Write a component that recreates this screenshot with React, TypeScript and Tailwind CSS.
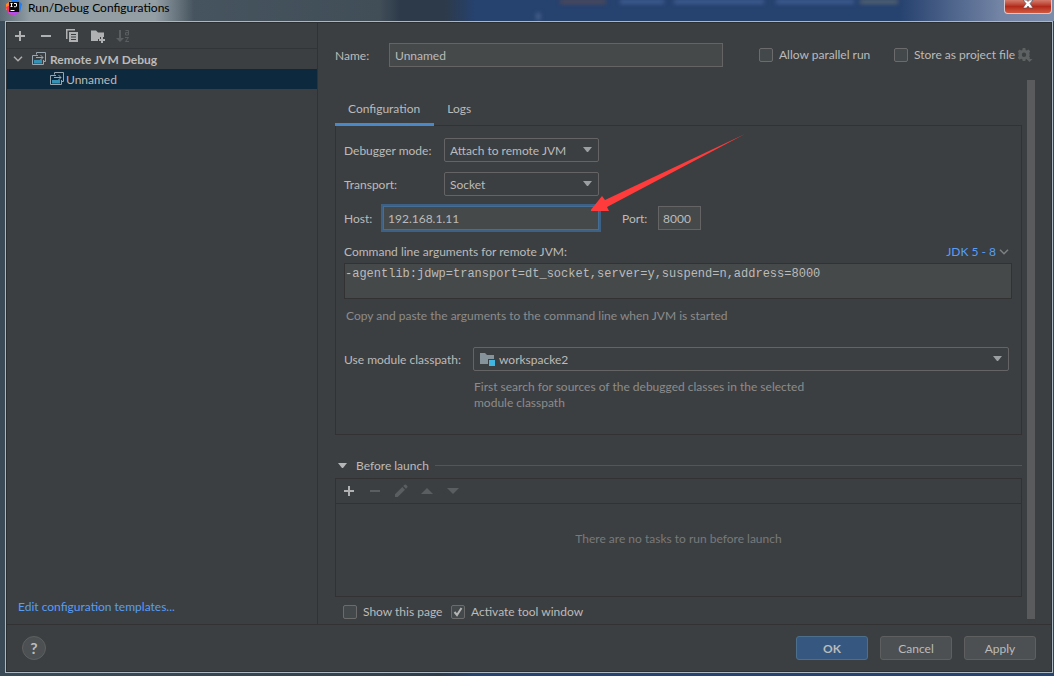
import { useState, type ReactNode } from "react";

const FIELD = "border border-[#646464] bg-[#45494a] text-[#bbbbbb] outline-none";

function PlusIcon() {
  return (
    <svg width="16" height="16" viewBox="0 0 16 16" fill="currentColor">
      <path d="M7 3h2v4h4v2H9v4H7V9H3V7h4z" />
    </svg>
  );
}

function MinusIcon() {
  return (
    <svg width="16" height="16" viewBox="0 0 16 16" fill="currentColor">
      <path d="M3 7h10v2H3z" />
    </svg>
  );
}

function CopyIcon() {
  return (
    <svg width="16" height="16" viewBox="0 0 16 16" fill="currentColor">
      <path d="M2 1h9v1.5H3.5V11H2z" />
      <path fillRule="evenodd" d="M5 4h9v10H5zM7 6v1h5V6zM7 8.500v1h5v-1zM7 11v1h5v-1z" />
    </svg>
  );
}

function NewFolderIcon() {
  return (
    <svg width="16" height="16" viewBox="0 0 16 16" fill="currentColor">
      <path d="M1 2.5h5l2 2h6V9h-4v2H8v2H1z" />
      <path d="M11 9h2v2h2v2h-2v2h-2v-2H9v-2h2z" />
    </svg>
  );
}

function SortIcon() {
  return (
    <svg width="16" height="16" viewBox="0 0 16 16" fill="none" stroke="currentColor">
      <path d="M4 2v9" strokeWidth="2" />
      <path d="M0 10h8l-4 4z" fill="currentColor" stroke="none" />
      <path d="M9.500 2.500h3V7h-3V4.700h3M9 9.500h3.500l-3 4H13" />
    </svg>
  );
}

function RemoteIcon() {
  return (
    <svg width="16" height="16" viewBox="0 0 16 16" fill="none">
      <path d="M5.500 3.500v-2h9v9H13" stroke="#9aa7b0" />
      <path d="M7 4.500H1.500v9h11V9" stroke="#9aa7b0" />
      <path d="M5 6.500h7M9.500 4 12 6.500 9.500 9" stroke="#9aa7b0" />
      <path d="M3 9h8v3.500H3z" fill="#3592b5" />
    </svg>
  );
}

function GearIcon() {
  return (
    <svg width="16" height="16" viewBox="0 0 16 16" fill="#5e6162">
      <path
        fillRule="evenodd"
        d="M5.700 1h2.600l.4 1.900 1.100.5 1.700-1 1.700 2-1 1.500.4 1.100V8.500l-.5 1 1.100 1.600-1.800 1.800-1.600-1-1.100.4-.4 1.700H5.700l-.4-1.800-1.100-.5-1.700 1-1.700-2 1-1.600L1.400 8V7l.4-1.100-1-1.500 1.700-2 1.700 1 1.100-.5zM7 5.500a2.200 2.200 0 1 0 0 4.400 2.200 2.200 0 0 0 0-4.400z"
      />
      <path d="M9.500 12h6l-3 3z" />
    </svg>
  );
}

function PencilIcon() {
  return (
    <svg width="16" height="16" viewBox="0 0 16 16" fill="currentColor">
      <path d="M2 11.300 9.300 4 12 6.700 4.700 14H2zM10.200 3.100 11.600 1.700q.7-.6 1.400 0l1.300 1.300q.6.700 0 1.400l-1.400 1.400z" />
    </svg>
  );
}

function Triangle({ up = false }: { up?: boolean }) {
  return (
    <svg width="16" height="16" viewBox="0 0 16 16" fill="currentColor">
      <path d={up ? "M2 11h12L8 5z" : "M2 5h12l-6 6z"} />
    </svg>
  );
}

function SmallTriangle() {
  return (
    <svg width="10" height="6" viewBox="0 0 10 6" fill="currentColor">
      <path d="M0 0h9L5 5H4z" />
    </svg>
  );
}

function Chevron() {
  return (
    <svg width="10" height="6" viewBox="0 0 10 6" fill="none" stroke="currentColor" strokeWidth="1.500">
      <path d="M1 .700 5 4.700 9 .700" />
    </svg>
  );
}

function ModuleIcon() {
  return (
    <svg width="16" height="16" viewBox="0 0 16 16">
      <path d="M1 2h5l2 2h7v4H9v5H1z" fill="#87939a" />
      <path d="M10 9h6v6h-6z" fill="#40b6e0" />
    </svg>
  );
}

function AppLogo() {
  return (
    <svg width="16" height="16" viewBox="0 0 16 16">
      <path d="M0 4 6 0l4 5-4 6-6-1z" fill="#fc8a2b" />
      <path d="M5 0h7l4 4-2 8-5 1z" fill="#1f7df5" />
      <path d="M0 7 5 5l8 7-4 3-7-1z" fill="#fe2d63" />
      <path d="m2 12 8-1 3 2-4 2-6-1z" fill="#b64df0" />
      <path d="M3 2h10v10H3z" fill="#0a0a0a" />
      <path d="M4.500 3.500h2M5.500 3.500v3M4.500 6.500h2M8 3.500h2.500v2.500q0 .7-1 .7H8M4.500 10.500h4" stroke="#fff" fill="none" />
    </svg>
  );
}

function ToolButton({ label, disabled = false, children }: { label: string; disabled?: boolean; children: ReactNode }) {
  return (
    <button
      type="button"
      aria-label={label}
      title={label}
      disabled={disabled}
      className="flex size-4 items-center justify-center text-[#afb1b3] disabled:text-[#5b5e60]"
    >
      {children}
    </button>
  );
}

function CheckBox({ label, defaultChecked = false }: { label: string; defaultChecked?: boolean }) {
  return (
    <label className="flex items-center gap-1.5 whitespace-nowrap">
      <span className="grid size-3.5 place-items-center">
        <input
          type="checkbox"
          defaultChecked={defaultChecked}
          className="peer col-start-1 row-start-1 size-3.5 appearance-none rounded-xs border border-[#6b6b6b] bg-[#43494a]"
        />
        <svg
          viewBox="0 0 14 14"
          className="pointer-events-none invisible col-start-1 row-start-1 size-3.5 peer-checked:visible"
          fill="none"
          stroke="#b4b4b4"
          strokeWidth="2"
        >
          <path d="m3.500 7 2.500 3 4.500-7" />
        </svg>
      </span>
      {label}
    </label>
  );
}

function Combo({ id, options, icon, className }: { id: string; options: string[]; icon?: ReactNode; className: string }) {
  return (
    <div className={`relative h-6 ${className}`}>
      <select
        id={id}
        className={`h-6 w-full appearance-none rounded-xs border border-[#646464] bg-[#3c3f41] pt-0.5 pr-6 text-[#bbbbbb] outline-none ${
          icon ? "pl-[25px]" : "pl-[5px]"
        }`}
      >
        {options.map((o) => (
          <option key={o}>{o}</option>
        ))}
      </select>
      {icon && <span className="pointer-events-none absolute top-1 left-1.5">{icon}</span>}
      <span className="pointer-events-none absolute top-[9px] right-1.5 text-[#9c9fa1]">
        <SmallTriangle />
      </span>
    </div>
  );
}

function TitleBar() {
  return (
    <header className="flex h-[21px] items-start overflow-hidden bg-[linear-gradient(90deg,#5d6c77_0px,#46545f_190px,#414e58_380px,#2d3a4a_400px,#2d3a4a_445px,#26426f_475px,#26426f_900px,#7384a5_1000px,#7c8cab_1054px)]">
      <div className="flex h-[21px] items-start bg-[linear-gradient(90deg,transparent,#929da4_30px,#929da4_155px,transparent)] pr-6 pl-1.5">
        <div className="mr-1.5">
          <AppLogo />
        </div>
        <h1 className="leading-4 text-black">Run/Debug Configurations</h1>
      </div>
      {/* editor text seen through the glass */}
      <svg className="ml-auto shrink-0 blur-[2px]" width="460" height="21" viewBox="0 0 460 21" fill="none" strokeWidth="5">
        <path d="M24 1h46" stroke="#5a4a52" />
        <path d="M84 1h44M138 1h90M240 1h78" stroke="#45639a" />
        <path d="M324 1h38" stroke="#606a70" />
        <path d="M2 13v7" stroke="#48618c" />
      </svg>
      <button
        type="button"
        aria-label="Close"
        className="mr-[2px] ml-2 flex h-3.5 w-12 shrink-0 items-start justify-center rounded-b-sm border border-t-0 border-[#d9c9cf] bg-linear-to-b from-[#d47a6c] via-[#b3291a] to-[#cf5a40]"
      >
        <svg width="12" height="9" viewBox="0 0 12 9">
          <path d="M1 0h3.500L6 1.500 7.500 0H11L8 3.500 11 8H7.500L6 6 4.500 8H1l3-4.500z" fill="#fff" stroke="#4b4a5a" strokeWidth=".6" />
        </svg>
      </button>
    </header>
  );
}

function Sidebar() {
  return (
    <aside className="flex w-[311px] shrink-0 flex-col border-r border-[#323232]">
      <div className="flex h-[26px] shrink-0 items-center gap-2.5 border-b border-[#323537] pl-[5px]">
        <ToolButton label="Add New Configuration"><PlusIcon /></ToolButton>
        <ToolButton label="Remove Configuration"><MinusIcon /></ToolButton>
        <ToolButton label="Copy Configuration"><CopyIcon /></ToolButton>
        <ToolButton label="Create New Folder"><NewFolderIcon /></ToolButton>
        <ToolButton label="Sort Configurations" disabled><SortIcon /></ToolButton>
      </div>
      <ul className="flex-1">
        <li>
          <div className="flex h-5 items-center pl-1.5">
            <span className="mr-2 text-[#adadad]"><Chevron /></span>
            <RemoteIcon />
            <span className="ml-[3px] pt-0.5 font-bold">Remote JVM Debug</span>
          </div>
          <ul>
            <li className="flex h-5 items-center bg-[#0d293e] pl-[42px]">
              <RemoteIcon />
              <span className="ml-px pt-0.5">Unnamed</span>
            </li>
          </ul>
        </li>
      </ul>
      <a href="#templates" className="mb-[9px] ml-[11px] text-[#589df6]">
        Edit configuration templates...
      </a>
    </aside>
  );
}

function ConfigurationPanel() {
  const [host, setHost] = useState("192.168.1.11");
  const [port, setPort] = useState("8000");

  return (
    <section className="-mt-px border border-[#323232] pt-3 pr-[9px] pb-[23px] pl-2">
      <div className="flex flex-col gap-2.5">
        <div className="flex h-6 items-center">
          <label htmlFor="mode" className="w-[100px] pt-0.5">Debugger mode:</label>
          <Combo id="mode" options={["Attach to remote JVM", "Listen to remote JVM"]} className="w-[155px]" />
        </div>
        <div className="flex h-6 items-center">
          <label htmlFor="transport" className="w-[100px] pt-0.5">Transport:</label>
          <Combo id="transport" options={["Socket", "Shared memory"]} className="w-[155px]" />
        </div>
        <div className="flex h-6 items-center">
          <label htmlFor="host" className="w-[39px] pt-0.5">Host:</label>
          <div className="relative">
            <input
              id="host"
              value={host}
              onChange={(e) => setHost(e.target.value)}
              className="block h-6 w-[216px] border border-[#466d94] bg-[#45494a] px-1 text-[#bbbbbb] outline-2 outline-[#3d6185]"
            />
            <svg
              className="pointer-events-none absolute -top-18 left-52 z-10"
              width="156"
              height="80"
              viewBox="1 0 156 80"
              fill="#ff3b3b"
            >
              <path d="M0 77 12 62l3 4L155 0 17 73l2 4z" />
            </svg>
          </div>
          <label htmlFor="port" className="ml-[23px] w-9 pt-0.5">Port:</label>
          <input
            id="port"
            value={port}
            onChange={(e) => setPort(e.target.value)}
            className={`h-6 w-[43px] px-1 ${FIELD}`}
          />
        </div>
      </div>

      <div className="mt-3.5 mb-[3px] flex justify-between pr-[3px]">
        <label htmlFor="args">Command line arguments for remote JVM:</label>
        <button type="button" className="flex items-center gap-[3px] text-[#589df6]">
          JDK 5 - 8
          <span className="text-[#7d8183]"><Chevron /></span>
        </button>
      </div>
      <textarea
        id="args"
        readOnly
        value="-agentlib:jdwp=transport=dt_socket,server=y,suspend=n,address=8000"
        className="block h-9 w-full resize-none border border-[#323232] bg-[#45494a] py-0.5 font-['Liberation_Mono',monospace] text-xs text-[#bbbbbb] outline-none"
      />
      <p className="mt-[9px] pl-0.5 text-[#8c8c8c]">
        Copy and paste the arguments to the command line when JVM is started
      </p>

      <div className="mt-[23px] flex items-center pr-[3px]">
        <label htmlFor="module" className="w-[129px] shrink-0 pt-0.5">Use module classpath:</label>
        <Combo id="module" options={["workspacke2"]} icon={<ModuleIcon />} className="flex-1" />
      </div>
      <p className="mt-2 ml-[130px] max-w-[360px] text-[#8c8c8c]">
        First search for sources of the debugged classes in the selected
        <br />
        module classpath
      </p>
    </section>
  );
}

function BeforeLaunch() {
  return (
    <>
      <div className="mt-[18px] flex h-[25px] items-center">
        <button type="button" className="flex items-center gap-2 pl-[3px]">
          <span className="text-[#b4b6b8]"><SmallTriangle /></span>
          Before launch
        </button>
        <span className="ml-1.5 h-px flex-1 bg-[#515658]" />
      </div>
      <div className="flex min-h-[119px] flex-1 flex-col border border-[#323232]">
        <div className="flex h-[25px] items-center gap-2.5 border-b border-[#323232] pl-[5px]">
          <ToolButton label="Add"><PlusIcon /></ToolButton>
          <ToolButton label="Remove" disabled><MinusIcon /></ToolButton>
          <ToolButton label="Edit" disabled><PencilIcon /></ToolButton>
          <ToolButton label="Up" disabled><Triangle up /></ToolButton>
          <ToolButton label="Down" disabled><Triangle /></ToolButton>
        </div>
        <p className="pt-[27px] text-center text-[#787a7b]">There are no tasks to run before launch</p>
      </div>
      <div className="mt-2 flex h-3.5 items-center pl-2">
        <div className="w-[108px]">
          <CheckBox label="Show this page" />
        </div>
        <CheckBox label="Activate tool window" defaultChecked />
      </div>
    </>
  );
}

export default function App() {
  const [tab, setTab] = useState("Configuration");

  return (
    <div className="flex min-h-screen flex-col bg-[linear-gradient(90deg,#3a4a57_0px,#34414c_380px,#2d3a4a_440px,#26426f_475px,#26426f_100%)] pb-[3px] font-[Lato,sans-serif] text-xs leading-4 text-[#bbbbbb]">
      <TitleBar />
      <div className="mr-px ml-[5px] flex flex-1 border border-[#a9b7c2]">
        <div className="flex flex-1 flex-col border border-[#2b2f32] bg-[#3c3f41]">
          <div className="flex flex-1">
            <Sidebar />
            <main className="flex flex-1 flex-col pt-5 pl-[17px]">
              <div className="flex h-6 items-center pr-[18px]">
                <label htmlFor="name" className="w-[54px] pt-0.5">Name:</label>
                <input id="name" defaultValue="Unnamed" className={`h-6 min-w-0 flex-1 px-[5px] ${FIELD}`} />
                <div className="ml-9 w-[135px]">
                  <CheckBox label="Allow parallel run" />
                </div>
                <div className="w-[123px]">
                  <CheckBox label="Store as project file" />
                </div>
                <button type="button" aria-label="Manage file location">
                  <GearIcon />
                </button>
              </div>

              <div className="mt-[13px] mb-[5px] flex flex-1 gap-[5px] pr-4">
                <div className="flex flex-1 flex-col pt-[13px]">
                  <div role="tablist" className="z-10 flex h-[33px]">
                    {["Configuration", "Logs"].map((t) => (
                      <button
                        key={t}
                        type="button"
                        role="tab"
                        aria-selected={tab === t}
                        onClick={() => setTab(t)}
                        className={`border-b-3 px-3.5 pt-0.5 first:pl-[13px] last:pl-[13px] ${
                          tab === t ? "border-[#4a88c7]" : "border-transparent"
                        }`}
                      >
                        {t}
                      </button>
                    ))}
                  </div>
                  <ConfigurationPanel />
                  <BeforeLaunch />
                </div>
                <div className="w-2 bg-[#5a5b5c]" />
              </div>
            </main>
          </div>

          <footer className="flex h-[47px] items-center gap-3 border-t border-[#323232] pr-[15px] pl-[15px]">
            <button
              type="button"
              aria-label="Help"
              className="mr-auto size-6 rounded-full border border-[#5e6060] bg-[#4c5052] text-base leading-none font-bold"
            >
              ?
            </button>
            <button type="button" className="h-6 w-[72px] rounded-[3px] border border-[#4c708c] bg-[#365880] pt-0.5 font-bold">
              OK
            </button>
            <button type="button" className="h-6 w-[72px] rounded-[3px] border border-[#5e6060] bg-[#4c5052] pt-0.5">
              Cancel
            </button>
            <button type="button" className="h-6 w-[72px] rounded-[3px] border border-[#5e6060] bg-[#4c5052] pt-0.5">
              Apply
            </button>
          </footer>
        </div>
      </div>
    </div>
  );
}
